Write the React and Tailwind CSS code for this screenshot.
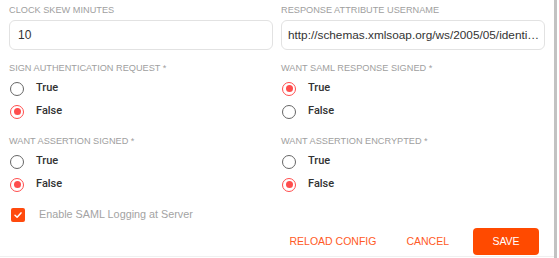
import React, { useState } from 'react';

const Label = ({ children }) => (
  <div className="h-[12px] text-[9.2px] leading-[12px] uppercase text-[#a0a0a0] whitespace-nowrap">
    {children}
  </div>
);

const Radio = ({ checked, label, onClick }) => (
  <div className="flex items-center h-[23px] cursor-pointer" onClick={onClick}>
    <span
      className={
        checked
          ? 'ml-[1px] w-[14px] h-[14px] rounded-full border-[1.5px] border-[#ff4d4d] flex items-center justify-center'
          : 'ml-[1px] w-[14px] h-[14px] rounded-full border-[1.5px] border-[#666666] flex items-center justify-center'
      }
    >
      {checked && <span className="w-[7px] h-[7px] rounded-full bg-[#ff4d4d]" />}
    </span>
    <span className="ml-[12px] text-[11px] font-medium text-[#333333]" style={{ fontFamily: 'Roboto, "Liberation Sans", sans-serif' }}>
      {label}
    </span>
  </div>
);

const RadioGroup = ({ title, value, onChange }) => (
  <div>
    <Label>{title}</Label>
    <div className="mt-[3px]">
      <Radio label="True" checked={value === true} onClick={() => onChange(true)} />
      <Radio label="False" checked={value === false} onClick={() => onChange(false)} />
    </div>
  </div>
);

export default function App() {
  const [signAuth, setSignAuth] = useState(false);
  const [respSigned, setRespSigned] = useState(true);
  const [assertSigned, setAssertSigned] = useState(false);
  const [assertEncrypted, setAssertEncrypted] = useState(false);
  const [logging, setLogging] = useState(true);

  return (
    <div className="flex w-[559px] h-[258px] bg-white" style={{ fontFamily: '"Liberation Sans", Arial, sans-serif' }}>
      <div className="w-[554px] h-[257px] border-b border-[#f0f0f0] flex flex-col">
        <div className="grid grid-cols-2 gap-x-[8px] px-[9px] pt-[4px]">
          <div>
            <Label>Clock Skew Minutes</Label>
            <input
              className="mt-[4px] w-full h-[30px] rounded-[6px] border border-[#e2e2e2] px-[8px] text-[12px] text-[#333333] outline-none"
              defaultValue="10"
            />
          </div>
          <div>
            <Label>Response Attribute Username</Label>
            <input
              className="mt-[4px] w-full h-[30px] rounded-[6px] border border-[#e2e2e2] pl-[6px] pr-[3px] text-[11.8px] text-[#333333] outline-none text-ellipsis overflow-hidden"
              defaultValue="http://schemas.xmlsoap.org/ws/2005/05/identity/claims/name"
            />
          </div>

          <div className="mt-[12px]">
            <RadioGroup title="Sign Authentication Request *" value={signAuth} onChange={setSignAuth} />
          </div>
          <div className="mt-[12px]">
            <RadioGroup title="Want SAML Response Signed *" value={respSigned} onChange={setRespSigned} />
          </div>

          <div className="mt-[12px]">
            <RadioGroup title="Want Assertion Signed *" value={assertSigned} onChange={setAssertSigned} />
          </div>
          <div className="mt-[12px]">
            <RadioGroup title="Want Assertion Encrypted *" value={assertEncrypted} onChange={setAssertEncrypted} />
          </div>
        </div>

        <div className="mt-[7px] px-[11px] flex items-center h-[23px] cursor-pointer" onClick={() => setLogging(!logging)}>
          <span className={logging ? 'w-[14px] h-[14px] rounded-[2px] bg-[#ff4a0d] flex items-center justify-center' : 'w-[14px] h-[14px] rounded-[2px] border-[1.5px] border-[#666666]'}>
            {logging && (
              <svg width="10" height="10" viewBox="0 0 10 10" fill="none">
                <path d="M2 5.2 L4.1 7.2 L8 2.9" stroke="white" strokeWidth="1.5" strokeLinecap="round" strokeLinejoin="round" />
              </svg>
            )}
          </span>
          <span className="ml-[14px] text-[10.8px] text-[#a3a3a3]">Enable SAML Logging at Server</span>
        </div>

        <div className="mt-[2px] flex justify-end items-center pr-[15px]">
          <button className="text-[10.5px] font-medium text-[#ff5a26] uppercase">Reload Config</button>
          <button className="ml-[30px] text-[10.5px] font-medium text-[#ff5a26] uppercase">Cancel</button>
          <button className="ml-[24px] w-[66px] h-[27px] rounded-[4px] bg-[#ff4a00] text-white text-[10.5px] font-medium uppercase">Save</button>
        </div>
      </div>
      <div className="w-[3px] h-full bg-[#c2c2c2]" />
    </div>
  );
}
